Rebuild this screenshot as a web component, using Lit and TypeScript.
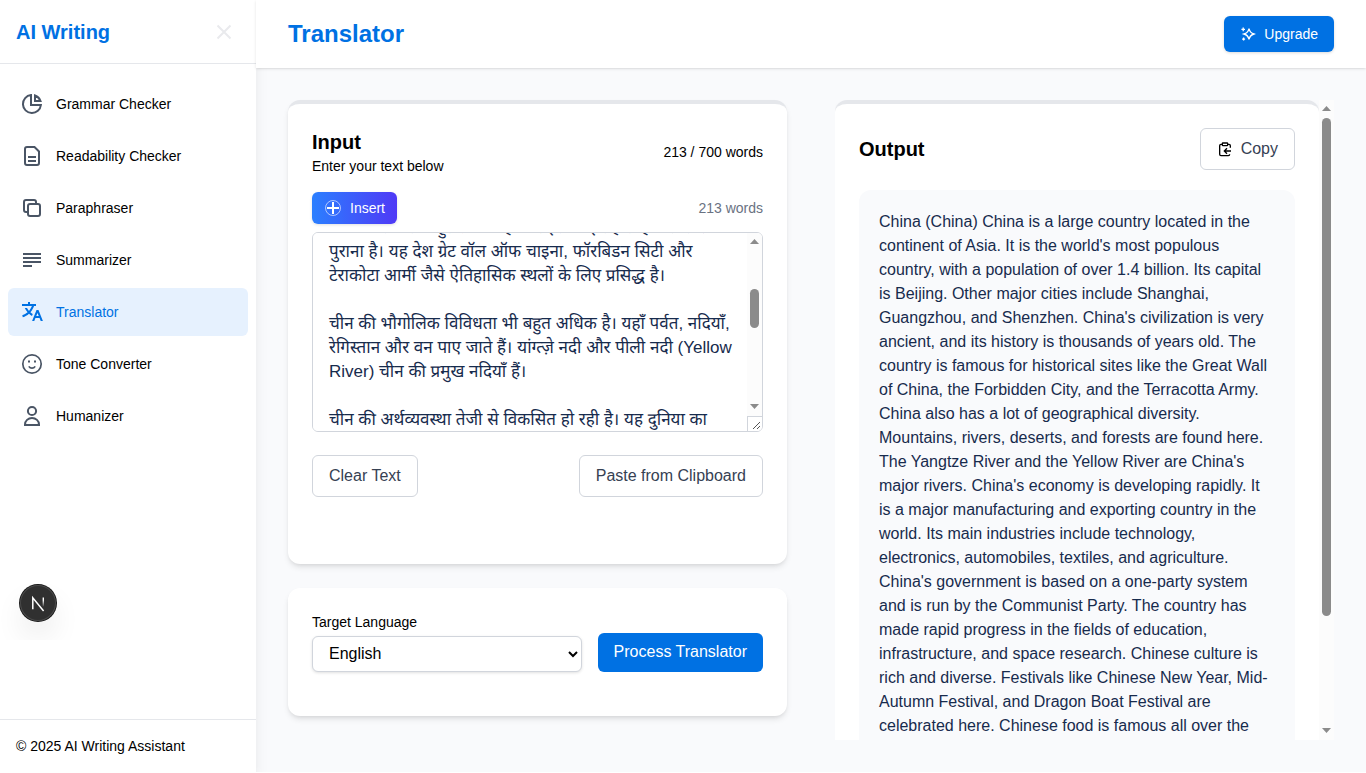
import { LitElement, html, css, svg } from "lit";
import { customElement, property, query } from "lit/decorators.js";
import { classMap } from "lit/directives/class-map.js";
import { styleMap } from "lit/directives/style-map.js";

const navItems = [
  {
    label: "Grammar Checker",
    icon: svg`<path d="M11 3.1V13h9.9A9 9 0 1 1 11 3.1z"/><path d="M15 3.5A9.2 9.2 0 0 1 20.5 9H15z"/>`,
  },
  {
    label: "Readability Checker",
    icon: svg`<path d="M7 3h7.5L19 7.5V19a2 2 0 0 1-2 2H7a2 2 0 0 1-2-2V5a2 2 0 0 1 2-2z"/><path d="M8 13h8M8 17h8"/>`,
  },
  {
    label: "Paraphraser",
    icon: svg`<path d="M8 16H6a2 2 0 0 1-2-2V6a2 2 0 0 1 2-2h8a2 2 0 0 1 2 2v2"/><rect x="8" y="8" width="12" height="12" rx="2"/>`,
  },
  { label: "Summarizer", icon: svg`<path d="M3 6h18M3 10h18M3 14h18M3 18h9"/>` },
  {
    label: "Translator",
    active: true,
    icon: svg`<path fill="currentColor" stroke="none" d="M18.5 10L22.9 21H20.745L19.544 18H15.454L14.255 21H12.101L16.5 10H18.5ZM10 2V4H16V6L14.0322 6.0006C13.2425 8.36616 11.9988 10.5057 10.4115 12.301C11.1344 12.9457 11.917 13.5176 12.7475 14.0079L11.9969 15.8855C10.9237 15.2781 9.91944 14.5524 8.99961 13.7249C7.21403 15.332 5.10914 16.5553 2.79891 17.2734L2.26257 15.3442C4.2385 14.7203 6.04543 13.6737 7.59042 12.3021C6.46277 11.0281 5.50873 9.57985 4.76742 8.00028L7.00684 8.00037C7.57018 9.03885 8.23979 10.0033 8.99967 10.877C10.2283 9.46508 11.2205 7.81616 11.9095 6.00101L2 6V4H8V2H10ZM17.5 12.8852L16.253 16H18.745L17.5 12.8852Z"/>`,
  },
  {
    label: "Tone Converter",
    icon: svg`<circle cx="12" cy="12" r="9.2" stroke-width="1.7"/><path stroke-width="1.7" d="M8.8 14.4c.8 1.2 1.9 1.8 3.2 1.8s2.4-.6 3.2-1.8"/><path d="M8 9.5h2M14 9.5h2"/>`,
  },
  {
    label: "Humanizer",
    icon: svg`<circle cx="12" cy="7" r="4.1"/><path d="M5 21v-.6a7 6.4 0 0 1 14 0v.6z"/>`,
  },
];

const sourceText = `चीन (China)

चीन की सभ्यता बहुत प्राचीन है और इसका इतिहास हजारों साल
पुराना है। यह देश ग्रेट वॉल ऑफ चाइना, फॉरबिडन सिटी और टेराकोटा आर्मी जैसे ऐतिहासिक स्थलों के लिए प्रसिद्ध है।

चीन की भौगोलिक विविधता भी बहुत अधिक है। यहाँ पर्वत, नदियाँ, रेगिस्तान और वन पाए जाते हैं। यांग्त्ज़े नदी और पीली नदी (Yellow River) चीन की प्रमुख नदियाँ हैं।

चीन की अर्थव्यवस्था तेजी से विकसित हो रही है। यह दुनिया का
एक प्रमुख विनिर्माण और निर्यातक देश है।

चीन की संस्कृति समृद्ध और विविध है।`;

const resultText =
  "China (China) China is a large country located in the continent of Asia. It is the world's most populous country, with a population of over 1.4 billion. Its capital is Beijing. Other major cities include Shanghai, Guangzhou, and Shenzhen. China's civilization is very ancient, and its history is thousands of years old. The country is famous for historical sites like the Great Wall of China, the Forbidden City, and the Terracotta Army. China also has a lot of geographical diversity. Mountains, rivers, deserts, and forests are found here. The Yangtze River and the Yellow River are China's major rivers. China's economy is developing rapidly. It is a major manufacturing and exporting country in the world. Its main industries include technology, electronics, automobiles, textiles, and agriculture. China's government is based on a one-party system and is run by the Communist Party. The country has made rapid progress in the fields of education, infrastructure, and space research. Chinese culture is rich and diverse. Festivals like Chinese New Year, Mid-Autumn Festival, and Dragon Boat Festival are celebrated here. Chinese food is famous all over the world. China is an important country.";

@customElement("scroll-rail")
class ScrollRail extends LitElement {
  @property({ type: Number }) start = 0;
  @property({ type: Number }) size = 50;

  static styles = css`
    :host {
      display: grid;
      grid-template-rows: 18px minmax(0, 1fr) 18px;
      width: 15px;
      background: #fcfcfc;
    }
    .arrow {
      display: block;
      width: 9px;
      height: 5px;
      margin: 6px auto 0;
      fill: #8b8b8b;
    }
    .track {
      display: flex;
      flex-direction: column;
      align-items: center;
    }
    .thumb {
      width: 9px;
      border-radius: 5px;
      background: #8b8b8b;
    }
  `;

  render() {
    return html`
      <svg class="arrow" viewBox="0 0 9 5"><path d="M4.5 0L9 5H0z" /></svg>
      <div class="track">
        <div style=${styleMap({ height: `${this.start}%` })}></div>
        <div class="thumb" style=${styleMap({ height: `${this.size}%` })}></div>
      </div>
      <svg class="arrow" viewBox="0 0 9 5"><path d="M0 0h9L4.5 5z" /></svg>
    `;
  }
}

@customElement("app-root")
class AppRoot extends LitElement {
  @query(".source") source!: HTMLTextAreaElement;

  static styles = css`
    :host {
      display: grid;
      grid-template-columns: 256px minmax(0, 1fr);
      height: calc(100vh - 1px);
      font-family: "Liberation Sans", Arial, "Noto Sans Devanagari", "Noto Sans", sans-serif;
      font-size: 16px;
      line-height: 24px;
      color: #000;
      background: #f9fafc;
    }
    * {
      box-sizing: border-box;
    }
    h1,
    h2,
    p {
      margin: 0;
    }
    button,
    select,
    textarea {
      font: inherit;
    }
    button {
      display: inline-flex;
      align-items: center;
      justify-content: center;
      gap: 8px;
      border: 0;
      border-radius: 6px;
      white-space: nowrap;
      cursor: pointer;
    }
    svg {
      flex: none;
      fill: none;
      stroke: currentColor;
      stroke-width: 2;
    }

    .sidebar {
      position: relative;
      z-index: 1;
      display: flex;
      flex-direction: column;
      background: #fff;
      box-shadow: 0 10px 15px -3px rgb(0 0 0 / 10%), 0 4px 6px -4px rgb(0 0 0 / 10%);
    }
    .brand {
      display: flex;
      align-items: center;
      justify-content: space-between;
      height: 64px;
      padding: 0 20px 0 16px;
      border-bottom: 1px solid #e5e7eb;
    }
    .brand-name {
      font-size: 20px;
      line-height: 28px;
      font-weight: 700;
      color: #0071e3;
    }
    .close {
      padding: 0;
      background: none;
      color: #e9eaed;
    }
    .nav {
      display: flex;
      flex: 1;
      flex-direction: column;
      gap: 4px;
      padding: 16px 8px;
    }
    .nav-link {
      display: flex;
      align-items: center;
      gap: 12px;
      height: 48px;
      padding: 0 12px;
      border-radius: 6px;
      font-size: 14px;
      line-height: 20px;
      color: #000;
      text-decoration: none;
    }
    .nav-link svg {
      color: #4a5565;
    }
    .nav-link.active,
    .nav-link.active svg {
      color: #0071e3;
    }
    .nav-link.active {
      background: #e6f1fe;
    }
    .legal {
      padding: 16px;
      border-top: 1px solid #e5e7eb;
      font-size: 14px;
      line-height: 20px;
    }
    .dev-tools {
      position: absolute;
      left: 0;
      bottom: 132px;
      width: 76px;
      height: 75px;
      padding: 20px;
      overflow: hidden;
    }
    .dev-badge {
      width: 36px;
      height: 36px;
      padding: 0;
      border-radius: 50%;
      background: #303030;
      color: #fff;
      box-shadow: 0 0 0 1px #171717, inset 0 0 0 1px #4a4a4a, 0 16px 32px -8px rgb(0 0 0 / 24%);
    }

    .page {
      display: flex;
      flex-direction: column;
      min-width: 0;
      min-height: 0;
    }
    .topbar {
      position: relative;
      z-index: 2;
      display: flex;
      align-items: center;
      justify-content: space-between;
      height: 68px;
      padding: 0 32px;
      background: #fff;
      box-shadow: 0 1px 3px rgb(0 0 0 / 10%), 0 1px 2px -1px rgb(0 0 0 / 10%);
    }
    .title {
      font-size: 24px;
      line-height: 32px;
      color: #0071e3;
    }
    .upgrade {
      height: 36px;
      padding: 0 16px;
      background: #0071e3;
      color: #fff;
      font-size: 14px;
      box-shadow: 0 1px 3px rgb(0 0 0 / 15%);
    }
    .upgrade path {
      stroke-width: 1.3;
    }
    .workspace {
      display: grid;
      flex: 1;
      grid-template-columns: repeat(2, minmax(0, 1fr));
      gap: 48px;
      min-height: 0;
      padding: 32px;
    }
    .column {
      display: flex;
      flex-direction: column;
      gap: 24px;
    }
    .card {
      padding: 24px;
      border-radius: 12px;
      background: #fff;
      box-shadow: 0 4px 6px -1px rgb(0 0 0 / 10%), 0 2px 4px -2px rgb(0 0 0 / 10%);
    }
    .card.topped {
      border-top: 4px solid #e5e7eb;
    }
    .card.input {
      padding-bottom: 67px;
    }
    .card.language {
      padding-bottom: 44px;
    }
    .row {
      display: flex;
      align-items: center;
      justify-content: space-between;
    }
    .heading {
      font-size: 20px;
      line-height: 28px;
    }
    .small {
      font-size: 14px;
      line-height: 20px;
    }
    .muted {
      color: #6a7282;
    }
    .insert-row {
      margin: 16px 0 8px;
    }
    .insert {
      height: 32px;
      padding: 0 12px;
      background: linear-gradient(to right, #2b7fff, #4f39f6);
      color: #fff;
      font-size: 14px;
      box-shadow: 0 1px 3px rgb(0 0 0 / 12%);
    }
    .insert circle {
      stroke-width: 1;
      opacity: 0.6;
    }
    .editor {
      position: relative;
      display: flex;
      height: 200px;
      margin-bottom: 23px;
    }
    .source {
      flex: 1;
      min-width: 0;
      padding: 8px 24px 8px 16px;
      border: 1px solid #d1d5dc;
      border-radius: 6px;
      outline: 0;
      font-size: 17px;
      line-height: 24px;
      color: #172b4d;
      background: #fff;
      resize: none;
      scrollbar-width: none;
    }
    .editor-rail {
      position: absolute;
      inset: 1px 1px 1px auto;
      display: flex;
      flex-direction: column;
      border-radius: 0 5px 5px 0;
      overflow: hidden;
    }
    .editor-rail scroll-rail {
      flex: 1;
    }
    .grip {
      width: 15px;
      height: 15px;
      border: solid #d1d5dc;
      border-width: 1px 0 0 1px;
      background: #fff;
      stroke: #555;
      stroke-width: 1;
    }
    .outline {
      height: 42px;
      padding: 0 16px;
      border: 1px solid #d1d5dc;
      background: #fff;
      color: #364153;
    }
    .language-row {
      display: flex;
      align-items: flex-end;
      gap: 16px;
    }
    .field {
      display: flex;
      flex: 1;
      flex-direction: column;
      gap: 4px;
      min-width: 0;
    }
    .select {
      width: 100%;
      height: 36px;
      padding: 0 0 2px 12px;
      border: 1px solid #d1d5dc;
      border-radius: 6px;
      background: #fff;
      color: #000;
      box-shadow: 0 1px 3px rgb(0 0 0 / 12%);
    }
    .process {
      height: 39px;
      padding: 0 16px 2px;
      background: #0071e3;
      color: #fff;
    }
    .output-pane {
      display: flex;
      min-height: 0;
    }
    .output-scroll {
      flex: 1;
      min-width: 0;
      overflow-y: auto;
      scrollbar-width: none;
    }
    .output-row {
      margin-bottom: 20px;
    }
    .copy svg {
      color: #000;
    }
    .result {
      margin: 0;
      padding: 20px;
      border-radius: 12px;
      background: #f9fafc;
      color: #172b4d;
    }
  `;

  firstUpdated() {
    this.source.scrollTop = 73;
  }

  render() {
    return html`
      <aside class="sidebar">
        <div class="brand">
          <span class="brand-name">AI Writing</span>
          <button class="close" aria-label="Close menu">
            <svg width="24" height="24" viewBox="0 0 24 24"><path d="M5.5 5.5l13 13M18.5 5.5l-13 13" /></svg>
          </button>
        </div>
        <nav class="nav">
          ${navItems.map(
            (item) => html`
              <a class=${classMap({ "nav-link": true, active: !!item.active })} href="#">
                <svg width="24" height="24" viewBox="0 0 24 24">${item.icon}</svg>
                ${item.label}
              </a>
            `
          )}
        </nav>
        <div class="dev-tools">
          <button class="dev-badge" aria-label="Open developer tools">
            <svg width="36" height="36" viewBox="0 0 36 36">
              <defs>
                <linearGradient id="fade" x1="0" y1="0" x2="0" y2="1">
                  <stop offset="0.3" stop-color="#fff" />
                  <stop offset="1" stop-color="#fff" stop-opacity="0.1" />
                </linearGradient>
              </defs>
              <path d="M12.8 24.2V12.8L23.6 26" stroke-width="1.5" />
              <path d="M22.6 12.4h1.4v9h-1.4z" fill="url(#fade)" stroke="none" />
            </svg>
          </button>
        </div>
        <footer class="legal">© 2025 AI Writing Assistant</footer>
      </aside>

      <div class="page">
        <header class="topbar">
          <h1 class="title">Translator</h1>
          <button class="upgrade">
            <svg width="16" height="16" viewBox="0 0 16 16">
              <path d="M9 2.6c.7 3.2 1.8 4.5 5 5.4-3.2.9-4.3 2.2-5 5.4-.7-3.2-1.8-4.5-5-5.4 3.2-.9 4.3-2.2 5-5.4z" />
              <path d="M3.2 1.6v3.6M1.4 3.4H5M3.6 11.6v3M2.1 13.1h3" />
            </svg>
            Upgrade
          </button>
        </header>

        <main class="workspace">
          <div class="column">
            <section class="card topped input">
              <div class="row">
                <div>
                  <h2 class="heading">Input</h2>
                  <p class="small"><label for="source">Enter your text below</label></p>
                </div>
                <span class="small">213 / 700 words</span>
              </div>
              <div class="row insert-row">
                <button class="insert">
                  <svg width="18" height="18" viewBox="0 0 18 18">
                    <circle cx="9" cy="9" r="7.5" />
                    <path d="M9 3v12M3 9h12" />
                  </svg>
                  Insert
                </button>
                <span class="small muted">213 words</span>
              </div>
              <div class="editor">
                <textarea class="source" id="source" spellcheck="false" .value=${sourceText}></textarea>
                <div class="editor-rail" aria-hidden="true">
                  <scroll-rail .start=${26} .size=${26.5}></scroll-rail>
                  <svg class="grip" viewBox="0 0 14 14"><path d="M5 12L12 5M9 12l3-3" /></svg>
                </div>
              </div>
              <div class="row">
                <button class="outline">Clear Text</button>
                <button class="outline">Paste from Clipboard</button>
              </div>
            </section>

            <section class="card language">
              <div class="language-row">
                <div class="field">
                  <label class="small" for="language">Target Language</label>
                  <select class="select" id="language">
                    <option>English</option>
                    <option>Hindi</option>
                    <option>Spanish</option>
                  </select>
                </div>
                <button class="process">Process Translator</button>
              </div>
            </section>
          </div>

          <div class="output-pane">
            <div class="output-scroll">
              <section class="card topped">
                <div class="row output-row">
                  <h2 class="heading">Output</h2>
                  <button class="outline copy">
                    <svg width="16" height="16" viewBox="0 0 24 24">
                      <rect x="8" y="3" width="8" height="4" rx="1" />
                      <path d="M8 5H6a2 2 0 0 0-2 2v13a2 2 0 0 0 2 2h11a2 2 0 0 0 2-2M16 5h2a2 2 0 0 1 2 2v3M21 15H11M15 11l-4 4 4 4" />
                    </svg>
                    Copy
                  </button>
                </div>
                <p class="result">${resultText}</p>
              </section>
            </div>
            <scroll-rail .start=${0} .size=${82.5} aria-hidden="true"></scroll-rail>
          </div>
        </main>
      </div>
    `;
  }
}
